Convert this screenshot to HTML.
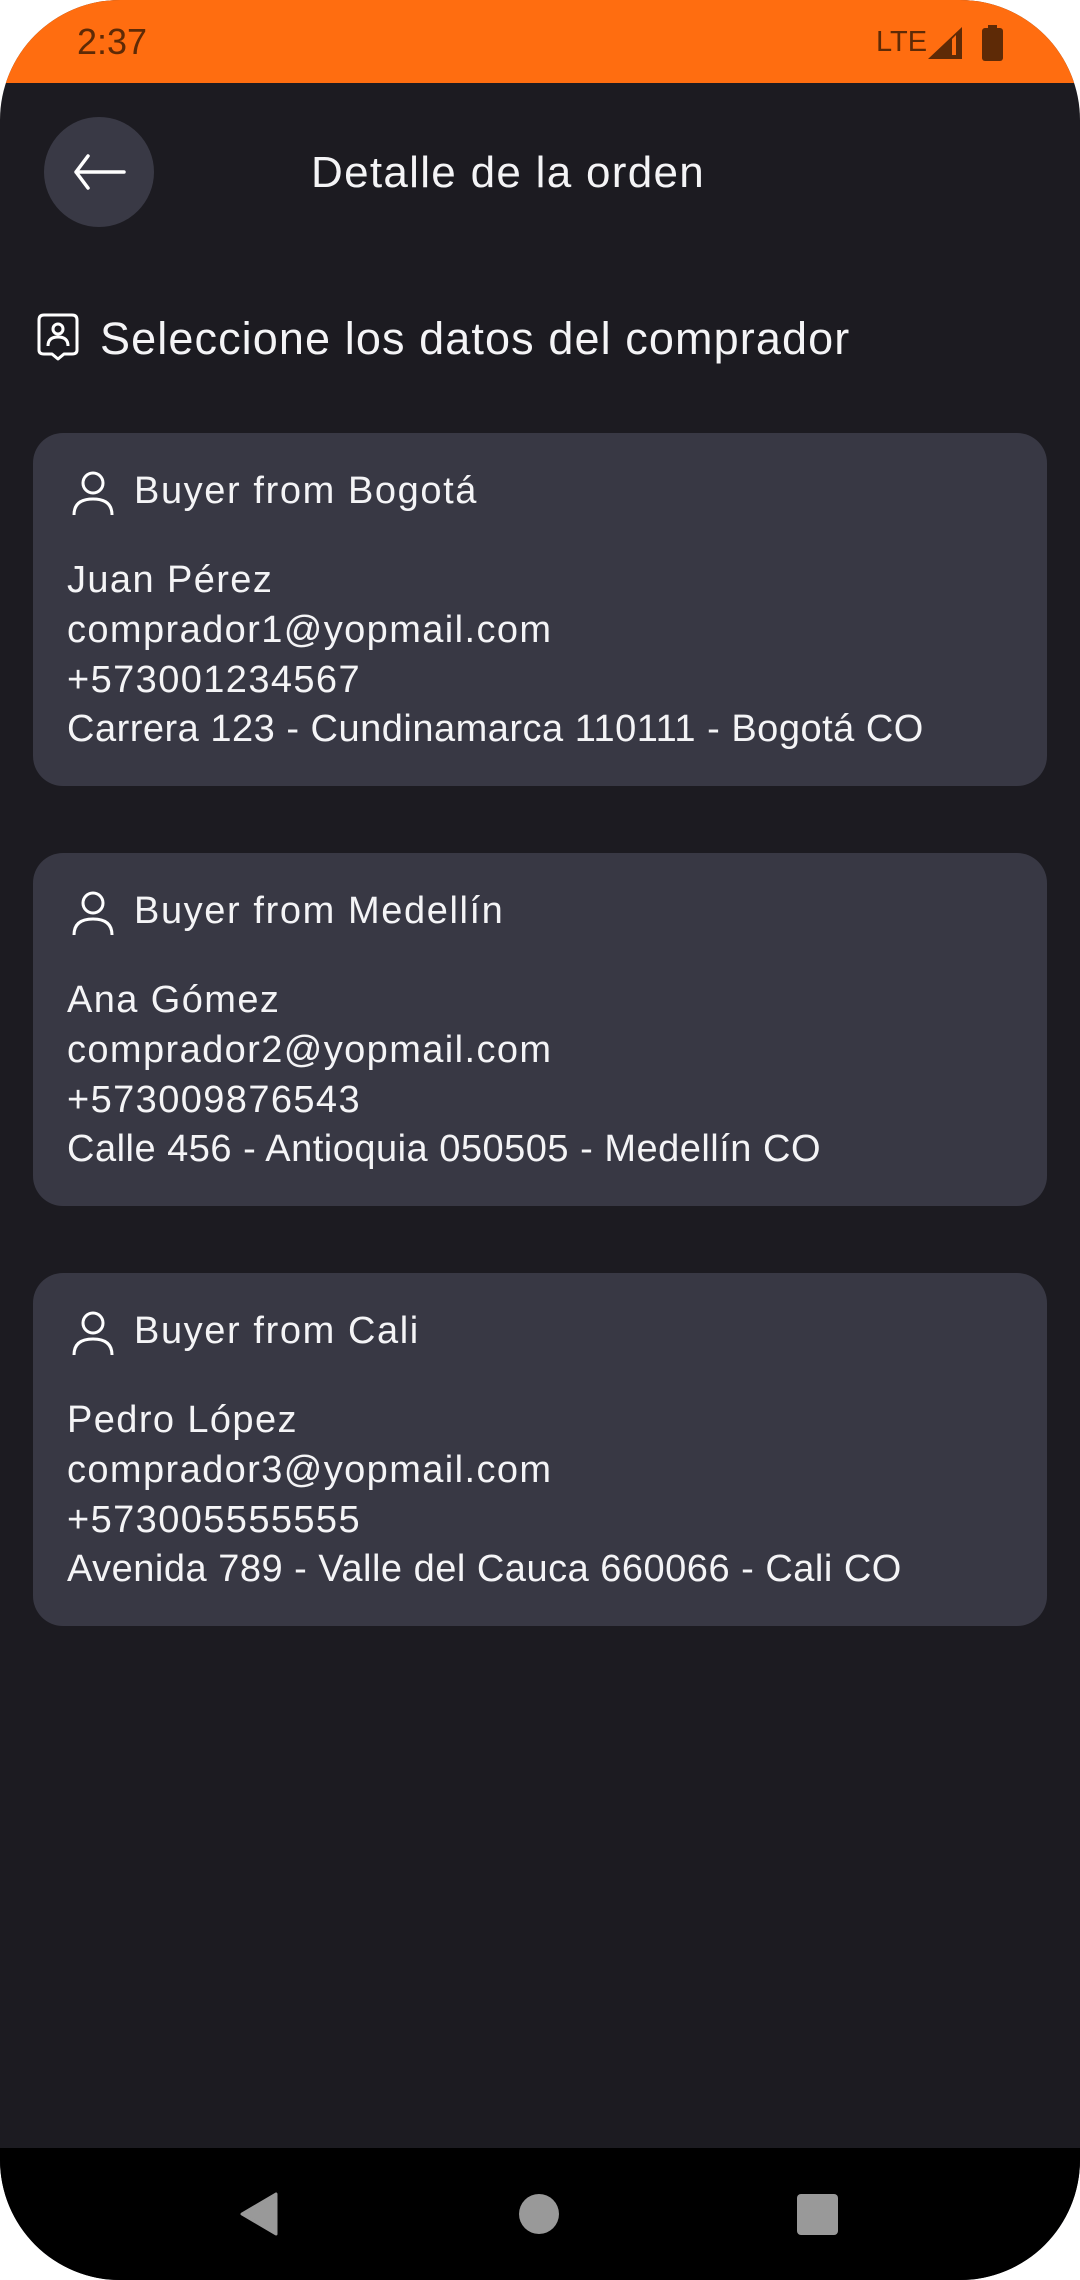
<!DOCTYPE html>
<html><head><meta charset="utf-8"><style>
html,body{margin:0;padding:0;background:#fff;}
#s{position:relative;width:1080px;height:2280px;overflow:hidden;border-radius:120px;background:#1c1b21;font-family:"Liberation Sans",sans-serif;color:#f4f4f6;}
.a{position:absolute;white-space:nowrap;}
.card{position:absolute;left:33px;width:1014px;height:353px;background:#383844;border-radius:30px;}
.card .h{position:absolute;left:101px;top:34px;font-size:38px;line-height:48px;letter-spacing:1.6px;}
.card .l{position:absolute;left:34px;font-size:38px;line-height:48px;letter-spacing:1.4px;}
.card .ad{letter-spacing:0.5px;}
.card svg{position:absolute;left:38px;top:38px;}
</style></head><body><div id="s">
<div class="a" style="left:0;top:0;width:1080px;height:83px;background:#ff6d10;"></div>
<div class="a" style="left:77px;top:22px;font-size:36px;color:#5e2a06;line-height:40px;">2:37</div>
<div class="a" style="left:876px;top:26px;font-size:29px;color:#5e2a06;line-height:32px;">LTE</div>
<svg class="a" style="left:926px;top:25px" width="40" height="36"><path d="M36 2V34H2Z" fill="#5e2a06"/><path d="M26 14V30H30V10Z" fill="#ff6d10"/></svg>
<svg class="a" style="left:980px;top:24px" width="26" height="38"><rect x="2" y="4" width="21" height="33" rx="3" fill="#5e2a06"/><rect x="8" y="1" width="9" height="5" fill="#5e2a06"/></svg>
<div class="a" style="left:44px;top:117px;width:110px;height:110px;border-radius:55px;background:#393945;"></div>
<svg class="a" style="left:68px;top:150px" width="60" height="44"><path d="M56 22H8M20 6L8 22L20 38" stroke="#fff" stroke-width="3.5" fill="none" stroke-linecap="round" stroke-linejoin="round"/></svg>
<div class="a" style="left:311px;top:148px;font-size:44px;line-height:50px;letter-spacing:1.3px;">Detalle de la orden</div>
<svg class="a" style="left:36px;top:312px" width="44" height="50"><path d="M8 3H36Q41 3 41 8V38Q41 42 36 42H28L22 47L16 42H8Q3 42 3 38V8Q3 3 8 3Z" stroke="#fff" stroke-width="3" fill="none" stroke-linejoin="round"/><circle cx="22" cy="17" r="5" stroke="#fff" stroke-width="3" fill="none"/><path d="M12 34Q12 25 22 25Q32 25 32 34" stroke="#fff" stroke-width="3" fill="none"/></svg>
<div class="a" style="left:100px;top:313px;font-size:45px;line-height:52px;letter-spacing:1.1px;">Seleccione los datos del comprador</div>

<div class="card" style="top:433px;"><svg width="44" height="48"><circle cx="22" cy="12" r="10" stroke="#fff" stroke-width="3" fill="none"/><path d="M3 44Q3 28 22 28Q41 28 41 44" stroke="#fff" stroke-width="3" fill="none"/></svg><div class="h">Buyer from Bogotá</div><div class="l" style="top:123px">Juan Pérez</div><div class="l" style="top:173px">comprador1@yopmail.com</div><div class="l" style="top:223px">+573001234567</div><div class="l ad" style="top:272px">Carrera 123 - Cundinamarca 110111 - Bogotá CO</div></div>

<div class="card" style="top:853px;"><svg width="44" height="48"><circle cx="22" cy="12" r="10" stroke="#fff" stroke-width="3" fill="none"/><path d="M3 44Q3 28 22 28Q41 28 41 44" stroke="#fff" stroke-width="3" fill="none"/></svg><div class="h">Buyer from Medellín</div><div class="l" style="top:123px">Ana Gómez</div><div class="l" style="top:173px">comprador2@yopmail.com</div><div class="l" style="top:223px">+573009876543</div><div class="l ad" style="top:272px">Calle 456 - Antioquia 050505 - Medellín CO</div></div>

<div class="card" style="top:1273px;"><svg width="44" height="48"><circle cx="22" cy="12" r="10" stroke="#fff" stroke-width="3" fill="none"/><path d="M3 44Q3 28 22 28Q41 28 41 44" stroke="#fff" stroke-width="3" fill="none"/></svg><div class="h">Buyer from Cali</div><div class="l" style="top:123px">Pedro López</div><div class="l" style="top:173px">comprador3@yopmail.com</div><div class="l" style="top:223px">+573005555555</div><div class="l ad" style="top:272px">Avenida 789 - Valle del Cauca 660066 - Cali CO</div></div>

<div class="a" style="left:0;top:2148px;width:1080px;height:132px;background:#000;"></div>
<svg class="a" style="left:236px;top:2190px" width="44" height="48"><path d="M40 4V44L6 24Z" fill="#999" stroke="#999" stroke-width="3" stroke-linejoin="round"/></svg>
<div class="a" style="left:519px;top:2194px;width:40px;height:40px;border-radius:20px;background:#999;"></div>
<div class="a" style="left:797px;top:2194px;width:41px;height:41px;border-radius:4px;background:#999;"></div>
</div></body></html>
